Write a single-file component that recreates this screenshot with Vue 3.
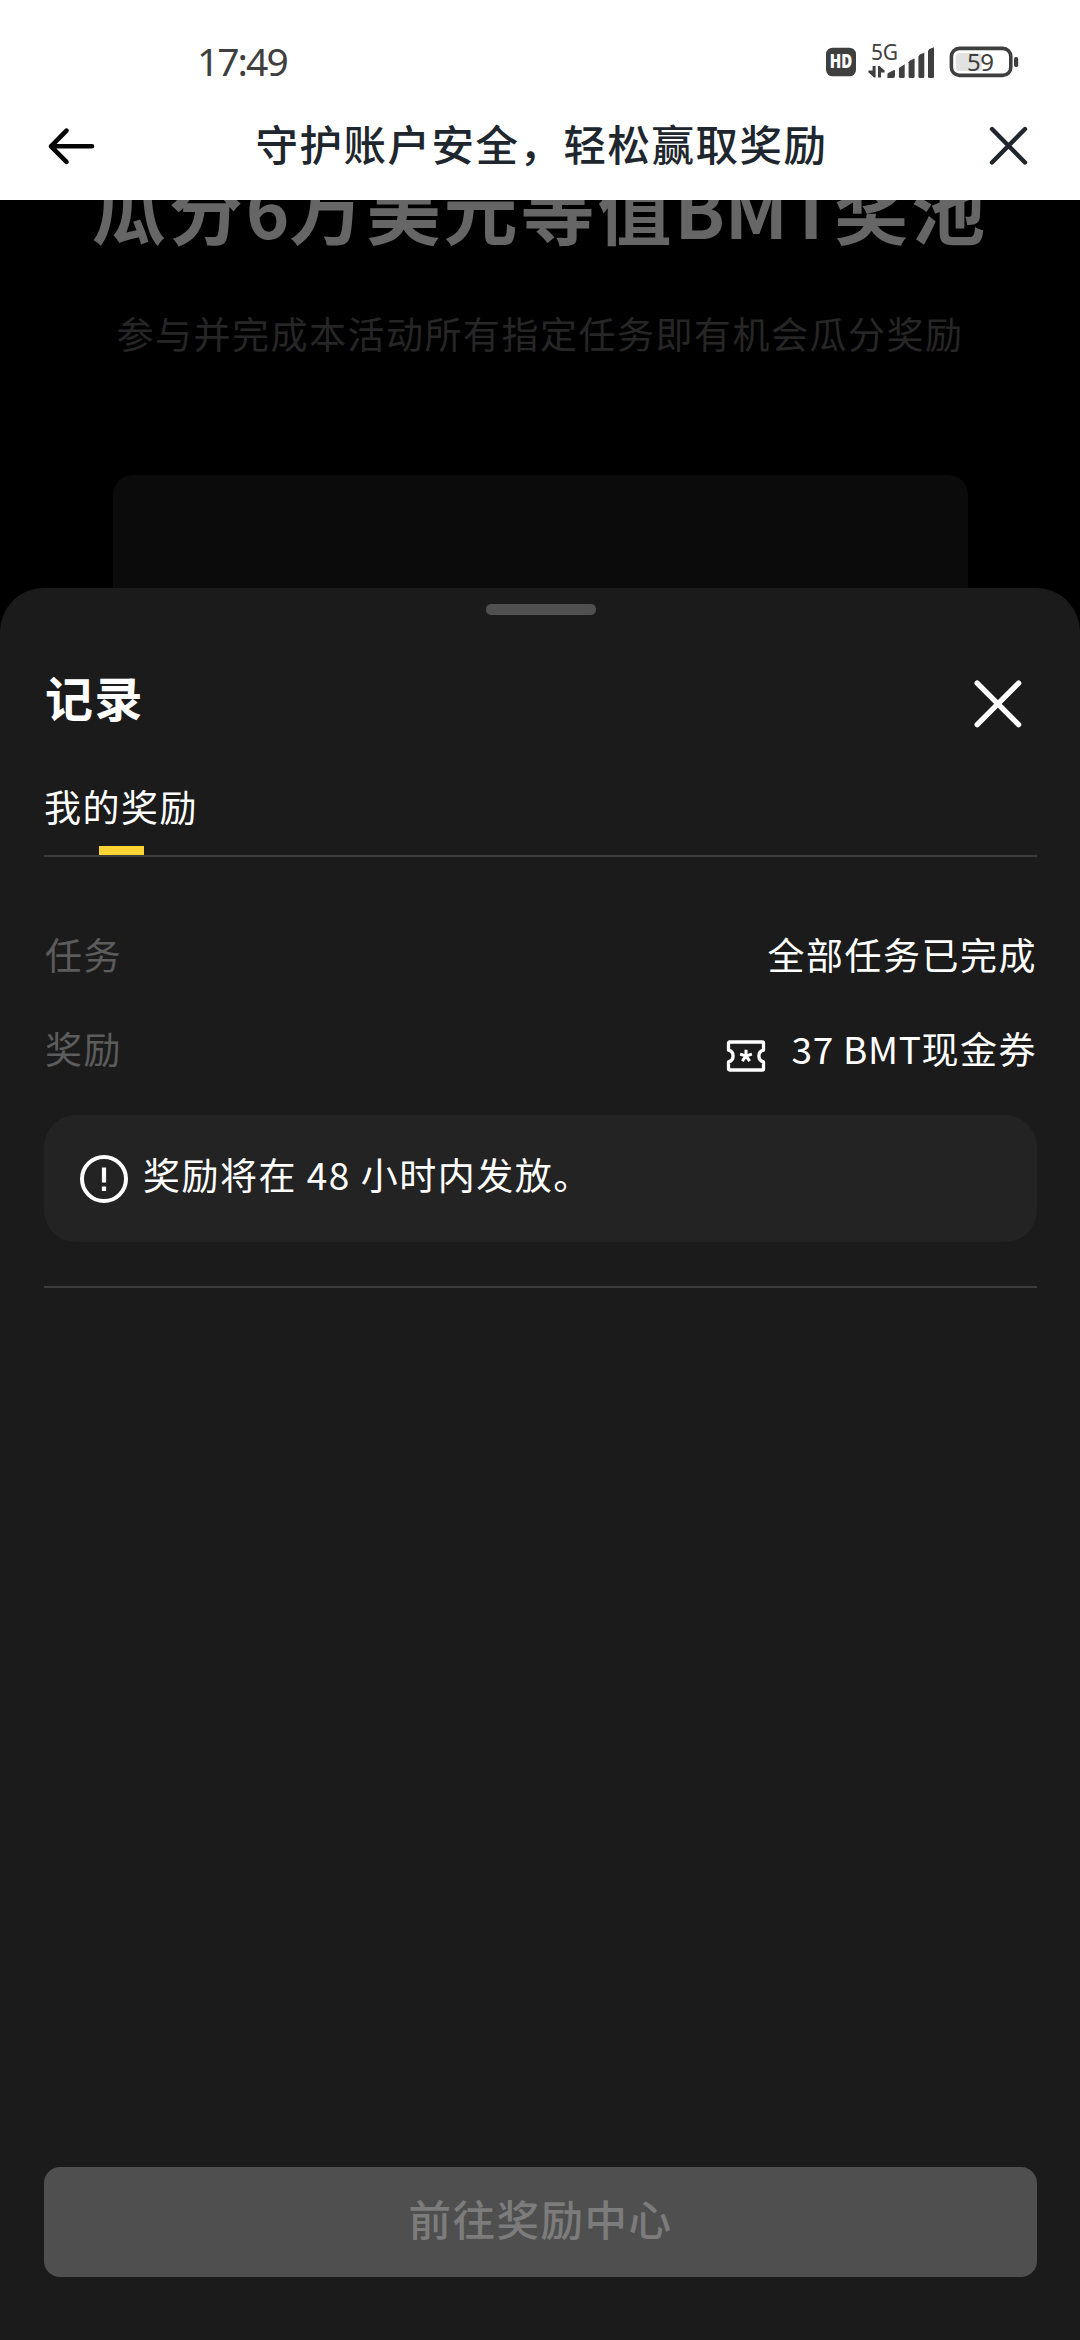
<script setup>
const rewards = {
  title: '记录',
  tab: '我的奖励',
  task: '全部任务已完成',
  amount: '37 BMT',
  unit: '现金券',
  notice: '奖励将在 48 小时内发放。',
}
</script>

<template>
  <div class="screen">
    <header class="top">
      <div class="status">
        <span class="clock">17:49</span>
        <svg class="status-icons" width="200" height="56" viewBox="822 34 200 56">
          <rect x="826" y="47.7" width="30" height="28.6" rx="6.5" fill="#3f3f3f" />
          <text x="841" y="68.3" class="hd" text-anchor="middle" textLength="22.5" lengthAdjust="spacingAndGlyphs">HD</text>
          <text x="871" y="60.2" class="net" textLength="27">5G</text>
          <g fill="#3f3f3f">
            <path d="M872.6 66h3v11.4h-1.6l-5.6-5.2v-1.6h4.2z" />
            <path d="M878 66h1.6l5 4.6v1.8h-3.6v5h-3z" />
            <path d="M887.4 78v-3.2q0-1.4 1.2-2l5-2.6q1.4-.6 1.4.8v5q0 2-2 2z" />
            <path d="M898.9 76.5v-8.4l5.8-3.8v12.2q0 1.5-1.5 1.5h-2.8q-1.5 0-1.5-1.5z" />
            <path d="M908.6 76.5v-14.2l1.4-1.8 4.6-2v18q0 1.5-1.5 1.5h-3q-1.5 0-1.5-1.5z" />
            <path d="M918.4 76.5v-20l1.4-2 4.5-1.8v23.8q0 1.5-1.5 1.5h-2.9q-1.5 0-1.5-1.5z" />
            <path d="M928 76.5v-25.400l1.400-2 4.600-1.800v29.200q0 1.500-1.500 1.500h-3q-1.500 0-1.500-1.500z" />
            <rect x="1014" y="57" width="4.200" height="10" rx="1.800" />
          </g>
          <rect x="955.700" y="53" width="26" height="18" rx="4" fill="#e2e2e2" />
          <rect x="951.400" y="48.400" width="59.400" height="27" rx="8" fill="none" stroke="#3f3f3f" stroke-width="3.600" />
          <text x="980.500" y="70.800" class="level" text-anchor="middle" textLength="27">59</text>
        </svg>
      </div>
      <div class="nav">
        <svg width="48" height="40" viewBox="0 0 48 40" fill="none" stroke="#050505" stroke-width="4.600" stroke-linecap="round" stroke-linejoin="round">
          <path d="M19.500 4.700 4 20.300l15.500 15.500M4 20.300h41" />
        </svg>
        <h1 class="nav-title">守护账户安全，轻松赢取奖励</h1>
        <svg width="40" height="40" viewBox="0 0 40 40" fill="none" stroke="#20262d" stroke-width="4.400" stroke-linecap="round">
          <path d="m3 3 33 33.500M36 3 3 36.500" />
        </svg>
      </div>
    </header>

    <section class="hero">
      <h2 class="hero-title">瓜分<span>6</span>万美元等值<span>BMT</span>奖池</h2>
      <p class="hero-sub">参与并完成本活动所有指定任务即有机会瓜分奖励</p>
      <div class="hero-card"></div>
    </section>

    <main class="sheet">
      <div class="handle"></div>
      <div class="sheet-head">
        <h3 class="sheet-title">{{ rewards.title }}</h3>
        <svg class="sheet-close" width="48" height="48" viewBox="0 0 48 48" fill="none" stroke="#fff" stroke-width="5.400" stroke-linecap="round">
          <path d="m3.200 3.200 41.400 41.400M44.600 3.200 3.200 44.600" />
        </svg>
      </div>
      <div class="tabs">
        <div class="tab">
          <span>{{ rewards.tab }}</span>
          <i class="indicator"></i>
        </div>
      </div>
      <div class="row task">
        <span class="label">任务</span>
        <span>{{ rewards.task }}</span>
      </div>
      <div class="row reward">
        <span class="label">奖励</span>
        <span class="value">
          <svg class="ticket" width="40" height="32" viewBox="0 0 40 32" fill="none" stroke="#fff">
            <path d="M3.500 2h33a1 1 0 0 1 1 1v7.200c-2.400.6-4.600 2.800-4.600 5.800s2.200 5.200 4.600 5.800V29a1 1 0 0 1-1 1h-33a1 1 0 0 1-1-1v-7.200c2.400-.6 4.600-2.800 4.600-5.800s-2.200-5.200-4.600-5.800V3a1 1 0 0 1 1-1z" stroke-width="3.300" stroke-linejoin="round" />
            <path d="M20 16V9.800M20 16l5.900-1.900M20 16l3.700 5.100M20 16l-3.700 5.100M20 16l-5.900-1.900" stroke-width="3" />
          </svg>
          <span class="amount">{{ rewards.amount }}</span>{{ rewards.unit }}
        </span>
      </div>
      <div class="notice">
        <svg width="50" height="50" viewBox="0 0 50 50" fill="none" stroke="#fff">
          <circle cx="25" cy="25" r="22" stroke-width="4" />
          <path d="M25 13.500v15M25 32.500v4.500" stroke-width="4.200" />
        </svg>
        <span class="notice-text">{{ rewards.notice }}</span>
      </div>
      <div class="divider"></div>
      <button class="cta" disabled>前往奖励中心</button>
    </main>
  </div>
</template>

<style>
body {
  margin: 0;
  background: #000;
}
</style>

<style scoped>
.screen {
  width: 1080px;
  height: 2340px;
  display: flex;
  flex-direction: column;
  overflow: hidden;
  background: #000;
  color: #fff;
  font-family: "Noto Sans CJK SC", sans-serif;
  font-size: 37px;
  line-height: 56px;
  letter-spacing: 1.5px;
}
h1, h2, h3, p {
  margin: 0;
}
svg {
  display: block;
  flex: none;
}
.top {
  height: 200px;
  flex: none;
  background: #fff;
}
.status {
  height: 82px;
  padding: 42px 58px 0 197px;
  box-sizing: border-box;
  display: flex;
  justify-content: space-between;
  align-items: center;
}
.clock {
  padding-bottom: 3px;
  font: 39px/40px "Noto Sans", sans-serif;
  letter-spacing: -2px;
  color: #3f3f3f;
}
.hd {
  font: 800 18.5px "Open Sans", sans-serif;
  letter-spacing: 0;
  fill: #fff;
}
.net {
  font: 21px "Noto Sans", sans-serif;
  letter-spacing: 0;
  fill: #3f3f3f;
}
.level {
  font: 24px "Noto Sans", sans-serif;
  letter-spacing: 0;
  fill: #3f3f3f;
}
.nav {
  height: 127px;
  padding: 0 51px 0 47px;
  display: flex;
  align-items: center;
  justify-content: space-between;
}
.nav-title {
  padding: 0 1px 5px 0;
  font-size: 42.5px;
  font-weight: 500;
  letter-spacing: 1.5px;
  color: #20262d;
}
.hero {
  height: 388px;
  flex: none;
  overflow: hidden;
  text-align: center;
}
.hero-title {
  margin-top: -38px;
  font-size: 74px;
  line-height: 90px;
  font-weight: 700;
  letter-spacing: 3px;
  color: #666;
  white-space: nowrap;
}
.hero-title span {
  letter-spacing: 0;
}
.hero-sub {
  margin-top: 53px;
  color: #262626;
  font-weight: 400;
}
.hero-card {
  width: 855px;
  height: 180px;
  margin: 114px auto 0;
  border-radius: 20px;
  background: #0b0b0b;
}
.sheet {
  flex: 1;
  box-sizing: border-box;
  padding: 16px 43px 63px 44px;
  display: flex;
  flex-direction: column;
  border-radius: 44px 44px 0 0;
  background: #1b1b1b;
}
.handle {
  width: 110px;
  height: 11px;
  align-self: center;
  border-radius: 5px;
  background: #505050;
}
.sheet-head {
  height: 60px;
  margin-top: 51px;
  display: flex;
  align-items: center;
  justify-content: space-between;
}
.sheet-title {
  padding-left: 1px;
  font-size: 48px;
  font-weight: 700;
}
.sheet-close {
  margin: 15px 15px 0 0;
}
.tabs {
  margin-top: 52px;
  display: flex;
  border-bottom: 2px solid #3c3c3c;
}
.tab {
  display: flex;
  flex-direction: column;
  align-items: center;
}
.indicator {
  width: 45px;
  height: 9px;
  margin-top: 12px;
  background: #fcd535;
}
.row {
  display: flex;
  justify-content: space-between;
}
.task {
  margin-top: 69px;
}
.reward {
  margin-top: 38px;
}
.label {
  padding-left: 1px;
  color: #5c5c5c;
}
.value {
  display: flex;
  align-items: center;
}
.amount {
  letter-spacing: .7px;
}
.ticket {
  margin: 15px 25px 0 0;
}
.notice {
  height: 127px;
  margin-top: 39px;
  padding-left: 35px;
  box-sizing: border-box;
  display: flex;
  align-items: center;
  gap: 14px;
  border-radius: 32px;
  background: #232323;
}
.notice-text {
  padding-bottom: 9px;
}
.divider {
  height: 2px;
  margin-top: 44px;
  background: #3c3c3c;
}
.cta {
  height: 110px;
  margin-top: auto;
  padding: 0 0 9px;
  border: 0;
  border-radius: 16px;
  background: #4f4f4f;
  color: #7c7c7c;
  font: 500 42.5px/56px "Noto Sans CJK SC", sans-serif;
  letter-spacing: 1.5px;
}
</style>
